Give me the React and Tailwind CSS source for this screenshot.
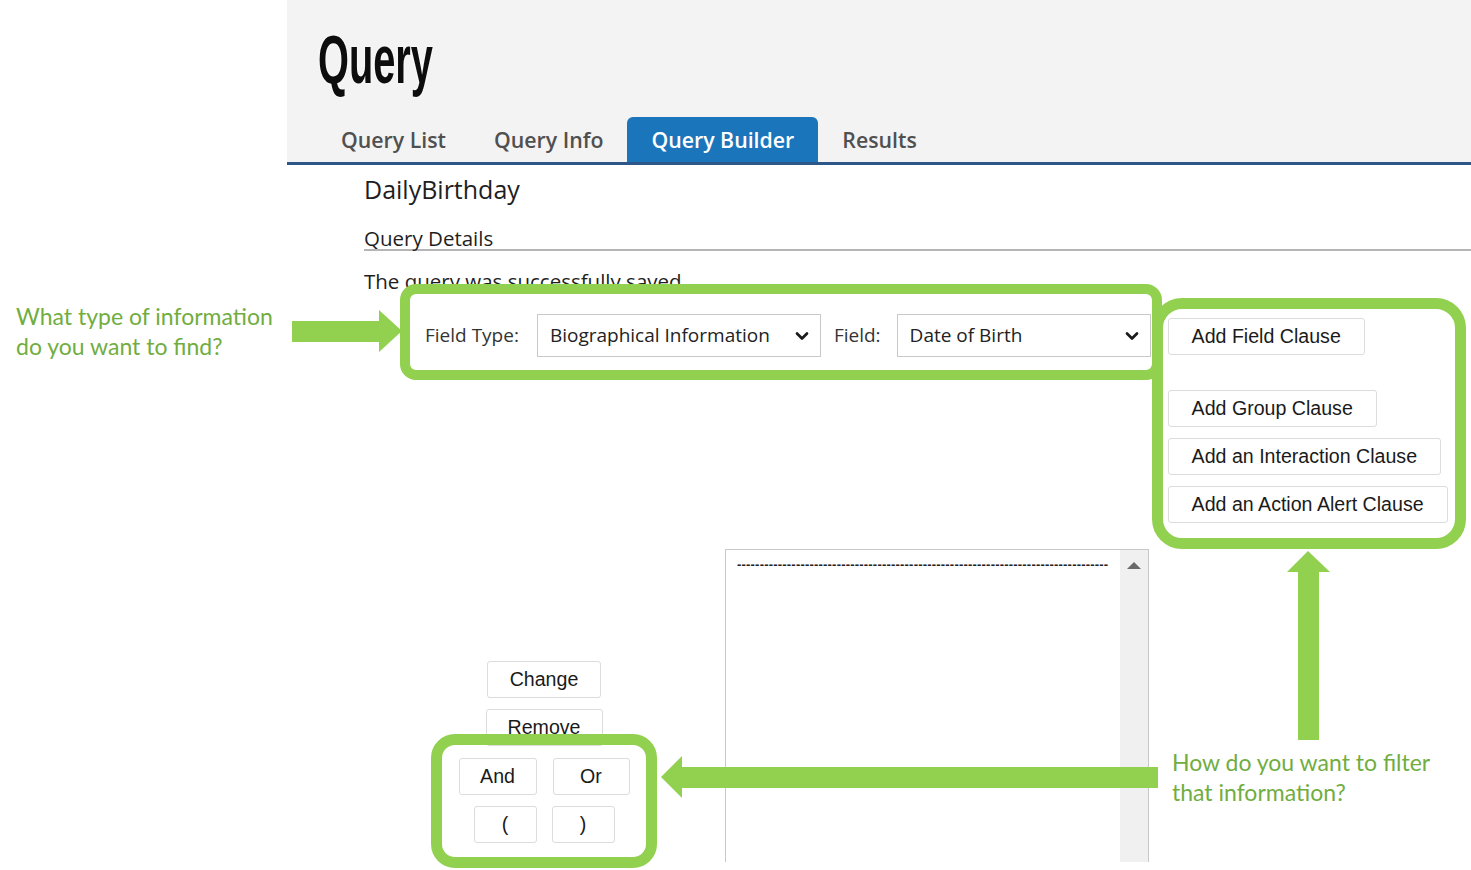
import { ChevronDown } from "lucide-react";

const ui = { fontFamily: '"Open Sans", "Liberation Sans", sans-serif' };
const arial = { fontFamily: '"Liberation Sans", Arial, sans-serif' };
const note = { fontFamily: 'Lato, "Open Sans", sans-serif' };

const Btn = ({ children, className = "" }) => (
  <button
    style={arial}
    className={`h-[37px] bg-white border border-[#dcdcdc] rounded-[3px] text-[19.6px] text-[#1a1a1a] leading-none ${className}`}
  >
    {children}
  </button>
);

const Select = ({ value, className = "" }) => (
  <div
    className={`h-[43px] bg-white border border-[#c9c9c9] flex items-center justify-between pl-[12px] pr-[8px] ${className}`}
  >
    <span className="text-[19px] text-[#222]">{value}</span>
    <ChevronDown size={20} strokeWidth={3.2} className="text-[#1a1a1a]" />
  </div>
);

const tabs = ["Query List", "Query Info", "Query Builder", "Results"];

export default function App() {
  return (
    <div className="relative w-[1471px] h-[870px] overflow-hidden bg-white flex">
      <div className="w-[287px] shrink-0" />

      <div className="flex-1 h-[862px] overflow-hidden" style={ui}>
        {/* header */}
        <div className="bg-[#f3f3f3] border-b-[3px] border-[#2d5789]">
          <div className="h-[117px] pl-[31px] pt-[25px]">
            <div
              style={arial}
              className="text-[68px] leading-[68px] font-bold text-[#0d0d0d] origin-left scale-x-[0.585] [text-shadow:0_0_4px_white]"
            >
              Query
            </div>
          </div>
          <div className="flex pl-[30px] h-[45px]">
            {tabs.map((t) => (
              <div
                key={t}
                className={`px-[24px] flex items-center text-[21.3px] font-semibold rounded-t-[6px] ${
                  t === "Query Builder"
                    ? "bg-[#1b75bb] text-white"
                    : "text-[#505050]"
                }`}
              >
                {t}
              </div>
            ))}
          </div>
        </div>

        {/* body */}
        <div className="pl-[77px]">
          <div className="mt-[8px] text-[25px] leading-[32px] text-[#1e1e1e]">
            DailyBirthday
          </div>
          <div className="mt-[22px] text-[20.5px] leading-[22px] text-[#1e1e1e] border-b-2 border-[#b5b5b5]">
            Query Details
          </div>
          <div className="mt-[16px] text-[20.5px] leading-[28px] text-[#1e1e1e]">
            The query was successfully saved
          </div>

          <div className="flex mt-[19px]">
            <div className="flex items-center h-[43px] ml-[61px]">
              <span className="text-[19px] text-[#333]">Field Type:</span>
              <Select value="Biographical Information" className="w-[284px] ml-[18px]" />
              <span className="text-[19px] text-[#333] ml-[13px]">Field:</span>
              <Select value="Date of Birth" className="w-[254px] ml-[16px]" />
            </div>
            <div className="flex flex-col items-start ml-[17px] pt-[4px]">
              <Btn className="px-[23px]">Add Field Clause</Btn>
              <Btn className="px-[23px] mt-[35px]">Add Group Clause</Btn>
              <Btn className="px-[23px] mt-[11px]">Add an Interaction Clause</Btn>
              <Btn className="px-[23px] mt-[11px]">Add an Action Alert Clause</Btn>
            </div>
          </div>

          <div className="flex mt-[26px]">
            <div className="w-[172px] ml-[94px] pt-[112px] flex flex-col items-center">
              <Btn className="w-[114px]">Change</Btn>
              <Btn className="w-[117px] mt-[11px]">Remove</Btn>
              <div className="flex gap-[16px] mt-[12px]">
                <Btn className="w-[78px]">And</Btn>
                <Btn className="w-[77px]">Or</Btn>
              </div>
              <div className="flex gap-[15px] mt-[11px]">
                <Btn className="w-[63px]">(</Btn>
                <Btn className="w-[63px]">)</Btn>
              </div>
            </div>
            <div className="ml-[95px] w-[424px] h-[330px] border border-[#c8c8c8] flex">
              <div
                style={arial}
                className="flex-1 pl-[11px] pt-[5px] text-[13px] leading-[20px] font-bold text-[#222] tracking-[0.2px] whitespace-nowrap overflow-hidden"
              >
                {"-".repeat(82)}
              </div>
              <div className="w-[28px] bg-[#f0f0f0] flex justify-center pt-[12px]">
                <div className="w-0 h-0 border-l-[7px] border-r-[7px] border-b-[7px] border-l-transparent border-r-transparent border-b-[#6a6a6a]" />
              </div>
            </div>
          </div>
        </div>
      </div>

      {/* annotations */}
      <div
        style={note}
        className="absolute left-[16px] top-[301px] text-[23px] leading-[30px] text-[#71ad3f]"
      >
        What type of information
        <br />
        do you want to find?
      </div>
      <div
        style={note}
        className="absolute left-[1172px] top-[747px] text-[23px] leading-[30px] text-[#71ad3f]"
      >
        How do you want to filter
        <br />
        that information?
      </div>

      <div className="absolute left-[1152px] top-[298px] w-[314px] h-[251px] border-[11px] border-[#92d050] rounded-[30px]" />
      <div className="absolute left-[400px] top-[284px] w-[762px] h-[96px] border-[10px] border-[#92d050] rounded-[16px]" />
      <div className="absolute left-[431px] top-[734px] w-[226px] h-[134px] border-[11px] border-[#92d050] rounded-[24px]" />

      <svg className="absolute left-0 top-0 pointer-events-none" width="1471" height="870">
        <g fill="#92d050">
          <rect x="292" y="321" width="90" height="21" />
          <polygon points="379,310 402,331 379,352" />
          <rect x="1298" y="570" width="21" height="170" />
          <polygon points="1287,572 1308,551 1330,572" />
          <rect x="680" y="767" width="478" height="21" />
          <polygon points="682,756 661,777 682,798" />
        </g>
      </svg>
    </div>
  );
}
